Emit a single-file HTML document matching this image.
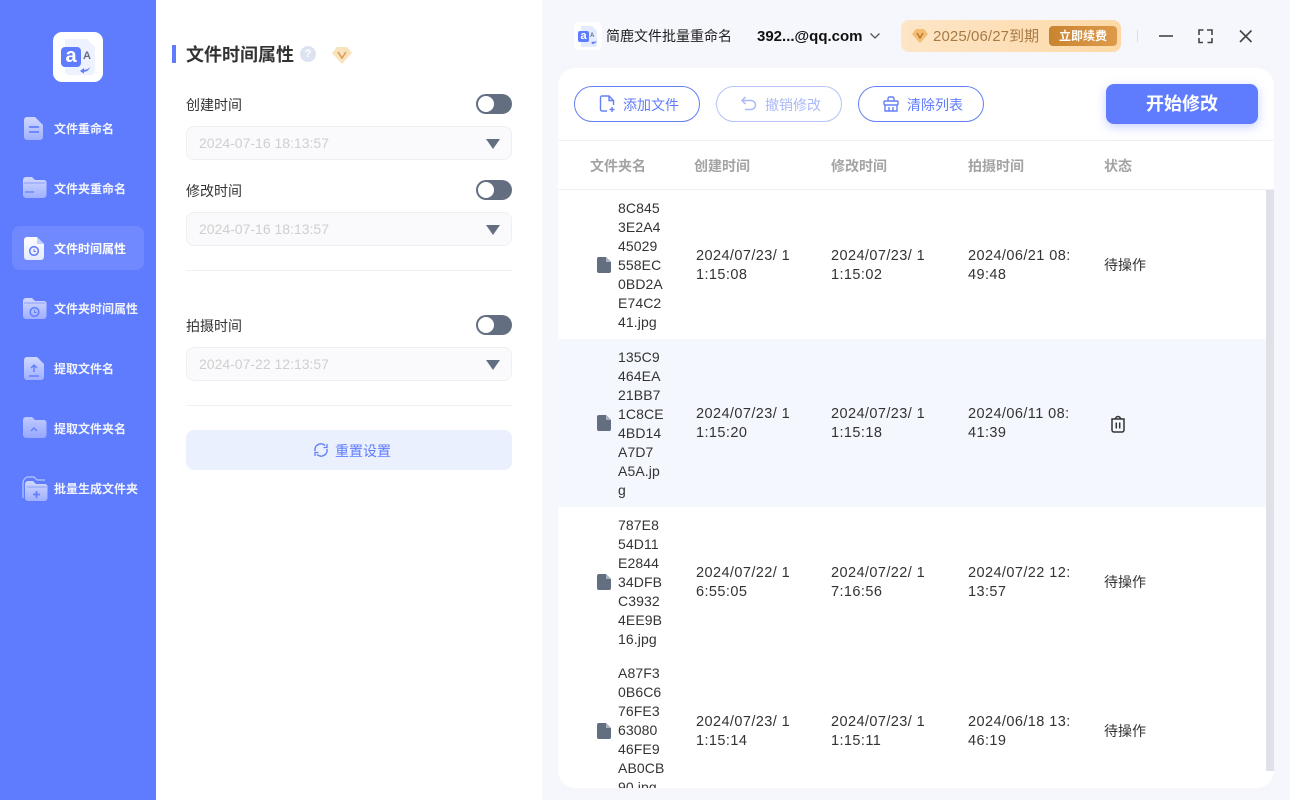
<!DOCTYPE html>
<html lang="zh-CN"><head><meta charset="utf-8"><title>简鹿文件批量重命名</title>
<style>
*{box-sizing:border-box;margin:0;padding:0}
html,body{width:1290px;height:800px;overflow:hidden;background:#fff}
body{position:relative;font-family:"Liberation Sans","Noto Sans CJK SC",sans-serif;color:#333}
.a{position:absolute;white-space:nowrap}
svg{position:absolute;display:block}
.side{left:0;top:0;width:156px;height:800px;background:#5f7cff}
.nav{left:54px;font-size:12px;font-weight:700;color:#f1f4ff;line-height:20px}
.lab{left:186px;font-size:14px;color:#333;line-height:20px}
.tog{left:476px;width:36px;height:20px;border-radius:10px;background:#646e81}
.tog:after{content:"";position:absolute;left:2px;top:2px;width:16px;height:16px;border-radius:50%;background:#fff}
.inp{left:186px;width:326px;height:34px;border:1px solid #efeff2;border-radius:8px;background:#fafafc;color:#cfcfcf;font-size:14px;line-height:33px;padding-left:12px}
.inp:after{content:"";position:absolute;left:299px;top:12px;border-left:7px solid transparent;border-right:7px solid transparent;border-top:10px solid #646e81}
.hr{left:186px;width:326px;height:1px;background:#f0f0f2}
.pill{top:86px;height:36px;border:1px solid #6580f5;border-radius:18px;background:#fff;color:#5f7cff;font-size:14px;line-height:37px}
.th{top:156px;font-size:14px;font-weight:700;color:#a3a3a3;line-height:20px}
.t{font-size:14.500px;line-height:19px;color:#333;letter-spacing:.42px}
.n{left:60px;line-height:19px;font-size:14px;color:#333;letter-spacing:.1px}
.s{font-size:14px;color:#333;line-height:20px}
</style></head><body>
<div class="a side"></div>
<svg style="left:0;top:0" width="156" height="520" viewBox="0 0 156 520">
<defs><linearGradient id="g" x1="0" y1="0" x2="0" y2="1"><stop offset="0" stop-color="#d0d8ff"/><stop offset="1" stop-color="#a0b0ff"/></linearGradient>
<linearGradient id="w" x1="0" y1="0" x2="0" y2="1"><stop offset="0" stop-color="#fff"/><stop offset="1" stop-color="#e4e9ff"/></linearGradient></defs>
<rect x="53" y="32" width="50" height="50" rx="9" fill="#fff"/>
<path d="M65 39h22l8 8v24a4 4 0 0 1-4 4H69a4 4 0 0 1-4-4z" fill="#eef2ff"/>
<rect x="61" y="47" width="20" height="20" rx="4" fill="#5f7cff"/>
<path d="M80 71l4-3v1.800c2.500 0 5-.8 6-3-.300 3-3 5-6 5v1.800z" fill="#5f7cff"/>
<rect x="12" y="226" width="132" height="44" rx="8" fill="#7189ff"/>
<path d="M27 117h8l8 8v12a3 3 0 0 1-3 3H27a3 3 0 0 1-3-3v-17a3 3 0 0 1 3-3z" fill="url(#g)"/><path d="M29 127h10M29 132h10" stroke="#6f88ff" stroke-width="2"/>
<path d="M26 177h6l3 3h9a2.500 2.500 0 0 1 2.500 2.500V195a3 3 0 0 1-3 3H26a3 3 0 0 1-3-3v-15a3 3 0 0 1 3-3z" fill="url(#g)"/><path d="M25 192h9" stroke="#6f88ff" stroke-width="1.500"/><path d="M24 183h21" stroke="#8d9fff"/>
<path d="M27 237h10l7 7v13a3 3 0 0 1-3 3H27a3 3 0 0 1-3-3v-17a3 3 0 0 1 3-3z" fill="url(#w)"/><path d="M37 237l7 7h-7z" fill="#c5d0ff"/><circle cx="34" cy="251" r="4.300" fill="none" stroke="#6580ff" stroke-width="1.600"/><path d="M34 249v2.500h2" stroke="#6580ff" fill="none"/>
<path d="M26 298h6l3 3h9a2.500 2.500 0 0 1 2.500 2.500V316a3 3 0 0 1-3 3H26a3 3 0 0 1-3-3v-15a3 3 0 0 1 3-3z" fill="url(#g)"/><path d="M24 303h21" stroke="#8d9fff"/><circle cx="34.500" cy="312" r="4.300" fill="none" stroke="#6580ff" stroke-width="1.600"/><path d="M34.500 310v2.500h2" stroke="#6580ff" fill="none"/>
<path d="M27 357h10l7 7v13a3 3 0 0 1-3 3H27a3 3 0 0 1-3-3v-17a3 3 0 0 1 3-3z" fill="url(#g)"/><path d="M34 372v-7m-3 3l3-3 3 3M29 376h10" stroke="#6580ff" stroke-width="1.500" fill="none"/>
<path d="M26 417h6l3 3h9a2.500 2.500 0 0 1 2.500 2.500V435a3 3 0 0 1-3 3H26a3 3 0 0 1-3-3v-15a3 3 0 0 1 3-3z" fill="url(#g)" opacity=".85"/><path d="M31 431l3-3 3 3" stroke="#6580ff" stroke-width="1.500" fill="none"/>
<path d="M23 498v-14a7 7 0 0 1 4-7h7l3 3h8" stroke="#b8c5ff" stroke-width="1.200" fill="none"/>
<path d="M28 481h5l3 3h9a2.500 2.500 0 0 1 2.500 2.500V498a3 3 0 0 1-3 3H28a3 3 0 0 1-3-3v-14a3 3 0 0 1 3-3z" fill="url(#g)"/><path d="M27 487h20" stroke="#8d9fff"/><path d="M36.500 491v7M33 494.500h7" stroke="#6580ff" stroke-width="1.800"/>
</svg>
<div class="a" style="left:61px;top:46px;width:20px;height:21px;color:#fff;font-size:20px;font-weight:700;text-align:center;line-height:20px">a</div>
<div class="a" style="left:83px;top:50px;color:#646e81;font-size:11px;font-weight:700;line-height:12px">A</div>
<div class="a nav" style="top:119px">文件重命名</div>
<div class="a nav" style="top:179px">文件夹重命名</div>
<div class="a nav" style="top:239px;color:#fff">文件时间属性</div>
<div class="a nav" style="top:299px">文件夹时间属性</div>
<div class="a nav" style="top:359px">提取文件名</div>
<div class="a nav" style="top:419px">提取文件夹名</div>
<div class="a nav" style="top:479px">批量生成文件夹</div>

<div class="a" style="left:172px;top:45px;width:4px;height:18px;background:#5f7cff"></div>
<div class="a" style="left:186px;top:42px;font-size:18px;font-weight:700;color:#333;line-height:26px">文件时间属性</div>
<div class="a" style="left:300px;top:46px;width:16px;height:16px;border-radius:50%;background:#dde3f1;color:#fff;font-size:11px;font-weight:700;text-align:center;line-height:16px">?</div>
<svg style="left:331px;top:45px" width="22" height="20" viewBox="0 0 22 20"><path d="M6 2h10l5 6-10 11L1 8z" fill="#f9e3bd"/><path d="M7 7l4 6 4-6" stroke="#dc9f5e" stroke-width="1.600" fill="none"/></svg>

<div class="a lab" style="top:95px">创建时间</div><div class="a tog" style="top:94px"></div>
<div class="a inp" style="top:126px">2024-07-16 18:13:57</div>
<div class="a lab" style="top:181px">修改时间</div><div class="a tog" style="top:180px"></div>
<div class="a inp" style="top:212px">2024-07-16 18:13:57</div>
<div class="a hr" style="top:270px"></div>
<div class="a lab" style="top:316px">拍摄时间</div><div class="a tog" style="top:315px"></div>
<div class="a inp" style="top:347px">2024-07-22 12:13:57</div>
<div class="a hr" style="top:405px"></div>
<div class="a" style="left:186px;top:430px;width:326px;height:40px;border-radius:8px;background:#ebf0ff"></div>
<svg style="left:313px;top:442px" width="16" height="16" viewBox="0 0 16 16" fill="none" stroke="#6580f5" stroke-width="1.500"><path d="M2 9a6 6 0 0 1 10-5.500"/><path d="M14 7a6 6 0 0 1-10 5.500"/><path d="M14 2v3.500h-3.500M2 14v-3.500h3.500" stroke-width="1.300"/></svg>
<div class="a" style="left:335px;top:441px;font-size:14px;color:#5f7cff;line-height:20px">重置设置</div>

<div class="a" style="left:542px;top:0;width:748px;height:800px;background:#f6f7fc"></div>
<div class="a" style="left:574px;top:22px;width:28px;height:28px;border-radius:5px;background:#fff"></div>
<svg style="left:574px;top:22px" width="28" height="28" viewBox="0 0 28 28"><path d="M7 4h11l5 5v14a2 2 0 0 1-2 2H7z" fill="#e4eaff"/><rect x="4" y="9" width="11" height="11" rx="2" fill="#5f7cff"/><path d="M17 21l2.500-2v1c1.500 0 2.500-.5 3-1.500 0 2-1.500 3-3 3v1z" fill="#5f7cff"/></svg>
<div class="a" style="left:578px;top:30px;width:11px;color:#fff;font-size:11px;font-weight:700;text-align:center;line-height:12px">a</div>
<div class="a" style="left:590px;top:32px;color:#646e81;font-size:6px;font-weight:700;line-height:8px">A</div>
<div class="a" style="left:606px;top:26px;font-size:14px;color:#222;line-height:20px">简鹿文件批量重命名</div>
<div class="a" style="left:757px;top:27px;font-size:15px;font-weight:700;color:#111;line-height:20px">392...@qq.com</div>
<svg style="left:869px;top:31px" width="12" height="10" viewBox="0 0 12 10"><path d="M1.500 2.500L6 7l4.500-4.500" stroke="#555" stroke-width="1.300" fill="none"/></svg>
<div class="a" style="left:901px;top:20px;width:220px;height:32px;border-radius:8px;background:linear-gradient(90deg,#fde5c6,#fdd9a8)"></div>
<svg style="left:911px;top:27px" width="18" height="17" viewBox="0 0 18 17"><path d="M5 2h8l4 5-8 9L1 7z" fill="#f4bd72"/><path d="M6 6l3 5 3-5" stroke="#b5742c" stroke-width="1.300" fill="none"/></svg>
<div class="a" style="left:933px;top:27px;font-size:15px;color:#a87a44;line-height:20px;letter-spacing:.1px">2025/06/27到期</div>
<div class="a" style="left:1049px;top:26px;width:68px;height:20px;border-radius:4px;background:linear-gradient(90deg,#c9842f,#dc9a4a);color:#fff;font-size:12px;font-weight:700;text-align:center;line-height:20px">立即续费</div>
<div class="a" style="left:1137px;top:30px;width:1px;height:12px;background:#dedfe3"></div>
<svg style="left:1155px;top:25px" width="105" height="22" viewBox="0 0 105 22" fill="none" stroke="#444" stroke-width="1.600"><path d="M4 11h14"/><path d="M44 10V5h4.500M52 5h5v5M57 13v4.500h-4.500M48 17.500h-4V13"/><path d="M85 5.500l11.500 11.500M96.500 5.500L85 17"/></svg>

<div class="a" style="left:558px;top:68px;width:716px;height:720px;border-radius:18px;background:#fff;overflow:hidden">
<div class="a" style="left:0;top:72px;width:716px;height:1px;background:#f0f0f2"></div>
<div class="a" style="left:0;top:121px;width:716px;height:1px;background:#f0f0f2"></div>
<div class="a" style="left:0;top:271px;width:708px;height:168px;background:#f5f7fe"></div>
<div class="a" style="left:708px;top:122px;width:8px;height:581px;background:#e0e0e9"></div>

<div class="a n" style="top:131px">8C845<br>3E2A4<br>45029<br>558EC<br>0BD2A<br>E74C2<br>41.jpg</div>
<div class="a n" style="top:280px">135C9<br>464EA<br>21BB7<br>1C8CE<br>4BD14<br>A7D7<br>A5A.jp<br>g</div>
<div class="a n" style="top:448px">787E8<br>54D11<br>E2844<br>34DFB<br>C3932<br>4EE9B<br>16.jpg</div>
<div class="a n" style="top:596px">A87F3<br>0B6C6<br>76FE3<br>63080<br>46FE9<br>AB0CB<br>90.jpg</div>

<div class="a t" style="left:138px;top:179px">2024/07/23/ 1<br>1:15:08</div>
<div class="a t" style="left:273px;top:179px">2024/07/23/ 1<br>1:15:02</div>
<div class="a t" style="left:410px;top:179px">2024/06/21 08:<br>49:48</div>
<div class="a s" style="left:546px;top:187px">待操作</div>

<div class="a t" style="left:138px;top:337px">2024/07/23/ 1<br>1:15:20</div>
<div class="a t" style="left:273px;top:337px">2024/07/23/ 1<br>1:15:18</div>
<div class="a t" style="left:410px;top:337px">2024/06/11 08:<br>41:39</div>

<div class="a t" style="left:138px;top:496px">2024/07/22/ 1<br>6:55:05</div>
<div class="a t" style="left:273px;top:496px">2024/07/22/ 1<br>7:16:56</div>
<div class="a t" style="left:410px;top:496px">2024/07/22 12:<br>13:57</div>
<div class="a s" style="left:546px;top:504px">待操作</div>

<div class="a t" style="left:138px;top:645px">2024/07/23/ 1<br>1:15:14</div>
<div class="a t" style="left:273px;top:645px">2024/07/23/ 1<br>1:15:11</div>
<div class="a t" style="left:410px;top:645px">2024/06/18 13:<br>46:19</div>
<div class="a s" style="left:546px;top:653px">待操作</div>

<svg style="left:39px;top:189px" width="14" height="16" viewBox="0 0 14 16"><path d="M2 0h7l5 5v9a2 2 0 0 1-2 2H2a2 2 0 0 1-2-2V2a2 2 0 0 1 2-2z" fill="#646e81"/><path d="M9 0l5 5H9z" fill="#aab1bf"/></svg>
<svg style="left:39px;top:347px" width="14" height="16" viewBox="0 0 14 16"><path d="M2 0h7l5 5v9a2 2 0 0 1-2 2H2a2 2 0 0 1-2-2V2a2 2 0 0 1 2-2z" fill="#646e81"/><path d="M9 0l5 5H9z" fill="#aab1bf"/></svg>
<svg style="left:39px;top:506px" width="14" height="16" viewBox="0 0 14 16"><path d="M2 0h7l5 5v9a2 2 0 0 1-2 2H2a2 2 0 0 1-2-2V2a2 2 0 0 1 2-2z" fill="#646e81"/><path d="M9 0l5 5H9z" fill="#aab1bf"/></svg>
<svg style="left:39px;top:655px" width="14" height="16" viewBox="0 0 14 16"><path d="M2 0h7l5 5v9a2 2 0 0 1-2 2H2a2 2 0 0 1-2-2V2a2 2 0 0 1 2-2z" fill="#646e81"/><path d="M9 0l5 5H9z" fill="#aab1bf"/></svg>
<svg style="left:552px;top:347px" width="16" height="18" viewBox="0 0 16 18" fill="none" stroke="#333" stroke-width="1.500"><path d="M2 4h12v11a2 2 0 0 1-2 2H4a2 2 0 0 1-2-2z"/><path d="M5.500 4a2.500 2.500 0 0 1 5 0"/><path d="M6.300 7.500v6M9.700 7.500v6"/></svg>
</div>

<div class="a pill" style="left:574px;width:126px;padding-left:48px">添加文件</div>
<svg style="left:599px;top:95px" width="18" height="18" viewBox="0 0 18 18" fill="none" stroke="#6580f5" stroke-width="1.400"><path d="M8 16H3a1.500 1.500 0 0 1-1.500-1.500v-12A1.500 1.500 0 0 1 3 1h7l4.500 4.500V10"/><path d="M10 1v4.500h4.500"/><path d="M13 12v5M10.500 14.500h5"/></svg>
<div class="a pill" style="left:716px;width:126px;padding-left:48px;border-color:#b5c2fb;color:#abb9fb">撤销修改</div>
<svg style="left:740px;top:95px" width="18" height="18" viewBox="0 0 18 18" fill="none" stroke="#abb9fb" stroke-width="1.500"><path d="M5.500 2L2 5.500 5.500 9"/><path d="M2.500 5.500H11a4.500 4.500 0 0 1 0 9H5"/></svg>
<div class="a pill" style="left:858px;width:126px;padding-left:48px">清除列表</div>
<svg style="left:882px;top:95px" width="18" height="18" viewBox="0 0 18 18" fill="none" stroke="#6580f5" stroke-width="1.400"><path d="M6 6V3.500A1.500 1.500 0 0 1 7.500 2h3A1.500 1.500 0 0 1 12 3.500V6"/><rect x="2" y="6" width="14" height="4" rx="1"/><path d="M3 10v6h12v-6M7 12v4M11 12v4"/></svg>
<div class="a" style="left:1106px;top:84px;width:152px;height:40px;border-radius:8px;background:#5f7cff;color:#fff;font-size:18px;font-weight:700;text-align:center;line-height:41px;box-shadow:0 3px 10px rgba(95,124,255,.35)">开始修改</div>
<div class="a th" style="left:590px">文件夹名</div>
<div class="a th" style="left:694px">创建时间</div>
<div class="a th" style="left:831px">修改时间</div>
<div class="a th" style="left:968px">拍摄时间</div>
<div class="a th" style="left:1104px">状态</div>
</body></html>
